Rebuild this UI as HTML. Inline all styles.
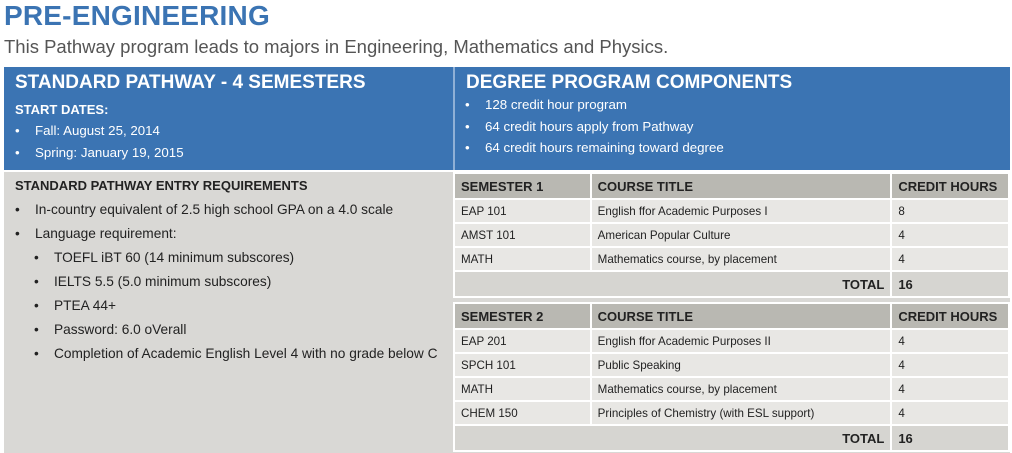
<!DOCTYPE html>
<html><head><meta charset="utf-8"><style>
*{margin:0;padding:0;box-sizing:border-box}
body{width:1012px;height:453px;background:#fff;font-family:"Liberation Sans",sans-serif;position:relative;overflow:hidden;color:#222}
.a{position:absolute}
h1{position:absolute;left:4px;top:0px;font-size:28px;color:#3b74b3;font-weight:bold;letter-spacing:0.2px}
.sub{left:4px;top:36px;font-size:18.5px;color:#555}
.blue{left:4px;top:67px;width:1006px;height:103px;background:#3b74b3;color:#fff}
.blue .div{position:absolute;left:449px;top:0;width:2px;height:103px;background:#8fb0d6}
.h2{font-size:19px;font-weight:bold}
.small{font-size:13px}
.li{font-size:13.3px;position:absolute}
.li:before{content:"•";position:absolute;left:-20px}
.gray .li{font-size:13.7px}
.gray{left:4px;top:172px;width:449px;height:281px;background:#d9d8d5}
table{position:absolute;left:453px;border-collapse:collapse;width:557px;font-size:11.6px}
td{border:2px solid #fff;height:24px;padding:0 6px;background:#e8e7e4}
tr.h td{background:#b9b8b2;font-weight:bold;font-size:13px;height:26px}
tr.t td{background:#d6d5d1;font-weight:bold;font-size:13px;height:26px}
</style></head><body>
<h1>PRE-ENGINEERING</h1>
<div class="a sub">This Pathway program leads to majors in Engineering, Mathematics and Physics.</div>
<div class="a blue">
 <div class="div"></div>
 <div class="a h2" style="left:11px;top:5px">STANDARD PATHWAY - 4 SEMESTERS</div>
 <div class="a small" style="left:11px;top:35px;font-weight:bold">START DATES:</div>
 <div class="li" style="left:31px;top:56px">Fall: August 25, 2014</div>
 <div class="li" style="left:31px;top:78px">Spring: January 19, 2015</div>
 <div class="a h2" style="left:462px;top:5px">DEGREE PROGRAM COMPONENTS</div>
 <div class="li" style="left:481px;top:30px">128 credit hour program</div>
 <div class="li" style="left:481px;top:52px">64 credit hours apply from Pathway</div>
 <div class="li" style="left:481px;top:73px">64 credit hours remaining toward degree</div>
</div>
<div class="a gray">
 <div class="a small" style="left:11px;top:6px;font-weight:bold">STANDARD PATHWAY ENTRY REQUIREMENTS</div>
 <div class="li" style="left:31px;top:30px">In-country equivalent of 2.5 high school GPA on a 4.0 scale</div>
 <div class="li" style="left:31px;top:54px">Language requirement:</div>
 <div class="li" style="left:50px;top:78px">TOEFL iBT 60 (14 minimum subscores)</div>
 <div class="li" style="left:50px;top:102px">IELTS 5.5 (5.0 minimum subscores)</div>
 <div class="li" style="left:50px;top:126px">PTEA 44+</div>
 <div class="li" style="left:50px;top:150px">Password: 6.0 oVerall</div>
 <div class="li" style="left:50px;top:174px">Completion of Academic English Level 4 with no grade below C</div>
</div>
<div class="a" style="left:453px;top:172px;width:557px;height:281px;background:#d9d8d5"></div>
<table style="top:172px">
<colgroup><col style="width:137px"><col style="width:302px"><col style="width:118px"></colgroup>
<tr class="h"><td>SEMESTER 1</td><td>COURSE TITLE</td><td>CREDIT HOURS</td></tr>
<tr><td>EAP 101</td><td>English ffor Academic Purposes I</td><td>8</td></tr>
<tr><td>AMST 101</td><td>American Popular Culture</td><td>4</td></tr>
<tr><td>MATH</td><td>Mathematics course, by placement</td><td>4</td></tr>
<tr class="t"><td colspan="2" style="text-align:right">TOTAL</td><td>16</td></tr>
</table>
<table style="top:302px">
<colgroup><col style="width:137px"><col style="width:302px"><col style="width:118px"></colgroup>
<tr class="h"><td>SEMESTER 2</td><td>COURSE TITLE</td><td>CREDIT HOURS</td></tr>
<tr><td>EAP 201</td><td>English ffor Academic Purposes II</td><td>4</td></tr>
<tr><td>SPCH 101</td><td>Public Speaking</td><td>4</td></tr>
<tr><td>MATH</td><td>Mathematics course, by placement</td><td>4</td></tr>
<tr><td>CHEM 150</td><td>Principles of Chemistry (with ESL support)</td><td>4</td></tr>
<tr class="t"><td colspan="2" style="text-align:right">TOTAL</td><td>16</td></tr>
</table>
</body></html>
